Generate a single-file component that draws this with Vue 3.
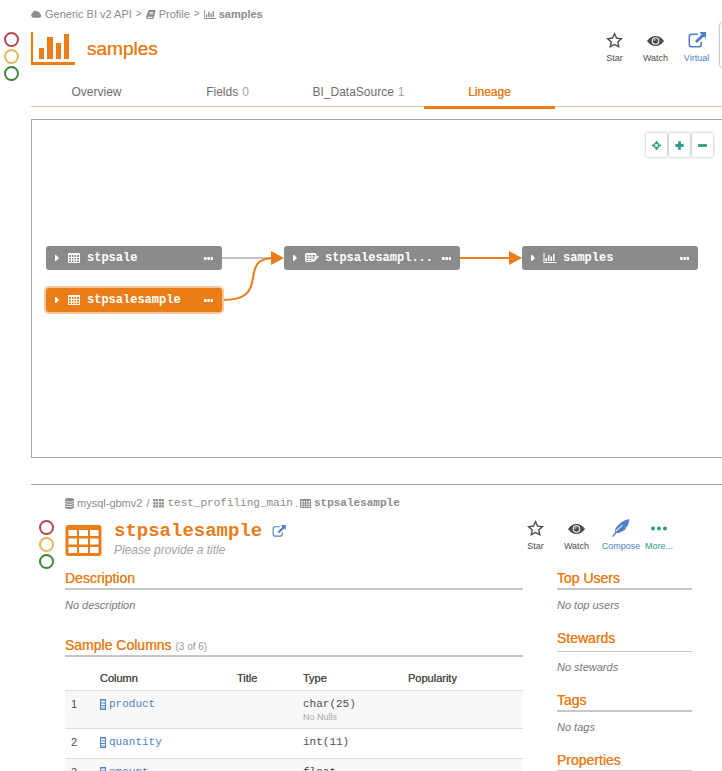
<script setup>
import { h } from 'vue'

const shapes = {
  chart: {
    box: '0 0 44 33',
    d: 'M0 0H2V30H44V33H0ZM8 16H13V27H8ZM16 5H22V27H16ZM25 11H30V27H25ZM33 2H38V27H33Z'
  },
  smallchart: {
    box: '0 0 26 20',
    d: 'M0 0H2V18H26V20H0ZM4 10H7V16H4ZM9 4H12V16H9ZM14 7H17V16H14ZM19 2H22V16H19Z'
  },
  table: {
    box: '0 0 36 31',
    d: 'M3 0H33Q36 0 36 3V28Q36 31 33 31H3Q0 31 0 28V3Q0 0 3 0ZM3 5V11H11.500V5ZM13.500 5V11H22.500V5ZM24.500 5V11H33V5ZM3 13.500V19.500H11.500V13.500ZM13.500 13.500V19.500H22.500V13.500ZM24.500 13.500V19.500H33V13.500ZM3 22V28H11.500V22ZM13.500 22V28H22.500V22ZM24.500 22V28H33V22Z'
  },
  grid: {
    box: '0 0 24 20',
    d: 'M2 0H22Q24 0 24 2V18Q24 20 22 20H2Q0 20 0 18V2Q0 0 2 0ZM2 4V8H6V4ZM8 4V8H11V4ZM13 4V8H16V4ZM18 4V8H22V4ZM2 10V13H6V10ZM8 10V13H11V10ZM13 10V13H16V10ZM18 10V13H22V10ZM2 15V18H6V15ZM8 15V18H11V15ZM13 15V18H16V15ZM18 15V18H22V15Z'
  },
  view: {
    box: '0 0 28 20',
    d: 'M4 0H20Q23 0 23 3V9L17 15L15 18H4Q0 18 0 14V4Q0 0 4 0ZM3 4V7H7V4ZM9 4V7H13V4ZM15 4V7H20V4ZM3 9V12H7V9ZM9 9V12H13V9ZM15 9V12H18L20 9ZM3 14V16H7V14ZM9 14V16H13V14ZM26 5L28 7L19 17L16 18L17 15Z'
  },
  cloud: {
    box: '0 0 30 20',
    d: 'M7 20A7 7 0 0 1 4 7A8 8 0 0 1 18 4A5 5 0 0 1 24 9A6 6 0 0 1 24 20Z'
  },
  book: {
    box: '0 0 26 24',
    d: 'M9 0H23Q26 1 25 4L20 21Q19 24 16 24H4Q0 23 0 19L5 3Q6 0 9 0ZM10 5L9 7H19L20 5ZM8 9L7 11H18L19 9ZM4 18Q3 21 5 21H16L18 18Z'
  },
  blocks: {
    box: '0 0 24 20',
    d: 'M0 0H5V5H0ZM6 0H11V5H6ZM13 0H18V5H13ZM19 0H24V5H19ZM0 7H5V12H0ZM6 7H11V12H6ZM13 7H18V12H13ZM19 7H24V12H19ZM0 14H5V19H0ZM6 14H11V19H6ZM13 14H18V19H13ZM19 14H24V19H19Z'
  },
  database: {
    box: '0 0 20 24',
    d: 'M0 3Q0 0 10 0T20 3V5Q20 8 10 8T0 5ZM0 7Q3 10 10 10T20 7V10Q20 13 10 13T0 10ZM0 12Q3 15 10 15T20 12V15Q20 18 10 18T0 15ZM0 17Q3 20 10 20T20 17V21Q20 24 10 24T0 21Z'
  },
  external: {
    box: '0 0 36 32',
    d: 'M7 3H20V6H8Q4 6 4 10V24Q4 28 8 28H21Q25 28 25 24V19H28V25Q28 31 22 31H7Q1 31 1 25V9Q1 3 7 3ZM23 0H36V13L32 9L18 22L14 18L27 5Z'
  },
  star: {
    box: '0 0 34 32',
    d: 'M17 0L22 11L34 12.500L25 20.500L27.500 32L17 26.500L6.500 32L9 20.500L0 12.500L12 11ZM17 6.500L13.800 13.500L6.500 14.500L12 19.500L10.500 27L17 23.500L23.500 27L22 19.500L27.500 14.500L20.200 13.500Z'
  },
  eye: {
    box: '0 0 34 20',
    d: 'M0 10Q7 0 17 0T34 10Q27 20 17 20T0 10ZM17 2.500A7.500 7.500 0 1 0 17 17.500A7.500 7.500 0 1 0 17 2.500ZM17 4.500A5.500 5.500 0 1 1 17 15.500A5.500 5.500 0 1 1 17 4.500ZM16 6.500A2.500 2.500 0 0 0 13.500 9.500H15A2 2 0 0 1 17 8V6.500Z'
  },
  feather: {
    box: '0 0 36 36',
    d: 'M0 35L6 27Q5 19 11 14Q14 11 18 7Q25 1 35 0Q34 8 31 14Q29 17 26 18L28 19Q25 23 20 25Q15 28 9 28L2 36ZM8 25L22 13L21 12L7 23Z'
  },
  dots: {
    box: '0 0 32 10',
    d: 'M4 1A4 4 0 1 1 4 9A4 4 0 1 1 4 1ZM16 1A4 4 0 1 1 16 9A4 4 0 1 1 16 1ZM28 1A4 4 0 1 1 28 9A4 4 0 1 1 28 1Z'
  },
  ellipsis: {
    box: '0 0 27 9',
    d: 'M1 0H6Q8 0 8 2V7Q8 9 6 9H2Q0 9 0 7V2ZM11 0H16Q18 0 18 2V7Q18 9 16 9H12Q10 9 10 7V2ZM21 0H25Q27 0 27 2V7Q27 9 25 9H22Q20 9 20 7V2Z'
  },
  caret: { box: '0 0 12 18', d: 'M0 0H3L12 9L3 18H0Z' },
  column: {
    box: '0 0 12 22',
    d: 'M0 0H12V22H0ZM2 3V7H10V3ZM2 9V12H10V9ZM2 14V17H10V14ZM2 19V20H10V19Z'
  },
  target: {
    box: '0 0 27 27',
    d: 'M11 0H16V4Q21 6 23 11H27V16H23Q21 21 16 23V27H11V23Q6 21 4 16H0V11H4Q6 6 11 4ZM11 8Q9 9 8 11H10V16H8Q9 18 11 19V17H16V19Q18 18 19 16H17V11H19Q18 9 16 8V10H11Z'
  },
  plus: { box: '0 0 26 26', d: 'M9 1H17V9H25V17H17V25H9V17H1V9H9Z' },
  minus: { box: '0 0 26 8', d: 'M0 0H26V8H0Z' }
}

const Icon = (props) =>
  h('svg', { viewBox: shapes[props.name].box, 'aria-hidden': 'true', fill: 'currentColor' }, [
    h('path', { d: shapes[props.name].d, 'fill-rule': 'evenodd' })
  ])
Icon.props = ['name']

const tabs = [
  { label: 'Overview' },
  { label: 'Fields', count: 0 },
  { label: 'BI_DataSource', count: 1 },
  { label: 'Lineage', active: true }
]

const nodes = [
  { id: 'sale', label: 'stpsale', icon: 'grid', x: 14, y: 126 },
  { id: 'sample', label: 'stpsalesample', icon: 'grid', x: 14, y: 168, selected: true },
  { id: 'source', label: 'stpsalesampl...', icon: 'view', x: 252, y: 126 },
  { id: 'report', label: 'samples', icon: 'smallchart', x: 490, y: 126 }
]

const columns = [
  { name: 'product', type: 'char(25)', note: 'No Nulls' },
  { name: 'quantity', type: 'int(11)' },
  { name: 'amount', type: 'float' }
]
</script>

<template>
  <main class="page">
    <section class="overview">
      <nav class="crumbs" aria-label="Breadcrumb">
        <a href="#"><Icon name="cloud" class="i-cloud" />Generic BI v2 API</a>
        <span class="sep">&gt;</span>
        <a href="#"><Icon name="book" class="i-book" />Profile</a>
        <span class="sep">&gt;</span>
        <a href="#" class="current"><Icon name="smallchart" class="i-chart" />samples</a>
      </nav>

      <div class="lights"><i class="red"></i><i class="amber"></i><i class="green"></i></div>
      <header class="head">
        <Icon name="chart" class="hero" />
        <h1>samples</h1>
        <div class="actions">
          <button type="button" class="action"><Icon name="star" class="i-star" />Star</button>
          <button type="button" class="action"><Icon name="eye" class="i-eye" />Watch</button>
          <button type="button" class="action blue"><Icon name="external" class="i-ext" />Virtual</button>
        </div>
        <button type="button" class="edge-button" aria-label="Menu"></button>
      </header>

      <ul class="tabs">
        <li v-for="t in tabs" :key="t.label" :class="{ active: t.active }">
          <a href="#">{{ t.label }}<span v-if="t.count !== undefined" class="count">{{ t.count }}</span></a>
        </li>
      </ul>

      <div class="canvas">
        <svg class="edges" aria-hidden="true">
          <path class="edge idle" d="M190 138H240" />
          <path class="edge" d="M190 180C214 180 219 172 221 158S226 139 241 138" />
          <path class="edge" d="M428 138H480" />
          <path class="tip" d="M239 131L252 138L239 145Z" />
          <path class="tip" d="M477 131L490 138L477 145Z" />
        </svg>
        <div
          v-for="n in nodes"
          :key="n.id"
          class="node"
          :class="{ selected: n.selected }"
          :style="{ left: n.x + 'px', top: n.y + 'px' }"
        >
          <Icon name="caret" class="i-caret" />
          <Icon :name="n.icon" class="i-node" />
          <span class="node-label">{{ n.label }}</span>
          <Icon name="ellipsis" class="i-more" />
        </div>
        <div class="zoom">
          <button type="button" aria-label="Center"><Icon name="target" class="i-zoom" /></button>
          <button type="button" aria-label="Zoom in"><Icon name="plus" class="i-zoom" /></button>
          <button type="button" aria-label="Zoom out"><Icon name="minus" class="i-zoom" /></button>
        </div>
      </div>
    </section>

    <section class="detail">
      <nav class="crumbs" aria-label="Table path">
        <a href="#"><Icon name="database" class="i-db" />mysql-gbmv2</a>
        <span class="sep">/</span>
        <a href="#" class="mono"><Icon name="blocks" class="i-blocks" />test_profiling_main</a>
        <span class="sep dot">.</span>
        <a href="#" class="current mono"><Icon name="grid" class="i-blocks" />stpsalesample</a>
      </nav>

      <div class="lights"><i class="red"></i><i class="amber"></i><i class="green"></i></div>
      <header class="head">
        <Icon name="table" class="hero" />
        <div class="titles">
          <h2>stpsalesample <a href="#" aria-label="Open"><Icon name="external" class="i-open" /></a></h2>
          <p>Please provide a title</p>
        </div>
        <div class="actions">
          <button type="button" class="action"><Icon name="star" class="i-star" />Star</button>
          <button type="button" class="action"><Icon name="eye" class="i-eye" />Watch</button>
          <button type="button" class="action blue wide"><Icon name="feather" class="i-feather" />Compose</button>
          <button type="button" class="action teal narrow"><Icon name="dots" class="i-dots" />More...</button>
        </div>
      </header>

      <div class="body">
        <div class="primary">
          <h3>Description</h3>
          <p class="empty">No description</p>
          <h3>Sample Columns <small>(3 of 6)</small></h3>
          <table>
            <colgroup>
              <col class="c-num" /><col class="c-name" /><col class="c-title" /><col class="c-type" /><col />
            </colgroup>
            <thead>
              <tr><th></th><th>Column</th><th>Title</th><th>Type</th><th>Popularity</th></tr>
            </thead>
            <tbody>
              <tr v-for="(c, i) in columns" :key="c.name">
                <td>{{ i + 1 }}</td>
                <td><a href="#" class="field"><Icon name="column" class="i-col" />{{ c.name }}</a></td>
                <td></td>
                <td><code>{{ c.type }}</code><span v-if="c.note" class="note">{{ c.note }}</span></td>
                <td></td>
              </tr>
            </tbody>
          </table>
        </div>
        <aside class="aside">
          <h3>Top Users</h3>
          <p class="empty">No top users</p>
          <h3 class="thin">Stewards</h3>
          <p class="empty">No stewards</p>
          <h3>Tags</h3>
          <p class="empty">No tags</p>
          <h3>Properties</h3>
        </aside>
      </div>
    </section>
  </main>
</template>

<style>
body {
  margin: 0;
  background: #fff;
}
</style>

<style scoped>
.page {
  height: 100vh;
  overflow: hidden;
  font: 11px/14px "Liberation Sans", Arial, sans-serif;
  color: #4d4d4d;
}
.page * {
  box-sizing: border-box;
}
h1, h2, h3, p, ul {
  margin: 0;
  padding: 0;
  font-weight: 400;
}
a {
  color: inherit;
  text-decoration: none;
}
svg {
  flex: none;
}
button {
  font: inherit;
  color: inherit;
  padding: 0;
  border: 0;
  background: none;
}
.mono, code, h2, .field, .node-label {
  font-family: "Courier New", "Liberation Mono", monospace;
}

.overview {
  display: grid;
  grid-template-columns: 27px minmax(0, 1fr);
  padding: 7px 0 0 4px;
}
.overview > :not(.lights),
.detail > :not(.lights) {
  grid-column: 2;
}
.lights {
  grid-column: 1;
  display: flex;
  flex-direction: column;
  gap: 2px;
  height: 46px;
  padding-top: 10px;
}
.lights i {
  flex: none;
  width: 15px;
  height: 15px;
  border: 2px solid;
  border-radius: 50%;
}
.lights .red { color: #b4454b; }
.lights .amber { color: #e9b45c; }
.lights .green { color: #3c873c; }

.crumbs {
  display: flex;
  align-items: center;
  color: #8b8b8b;
  white-space: nowrap;
}
.overview .crumbs {
  margin-bottom: 1px;
}
.crumbs a {
  display: flex;
  align-items: center;
  gap: 3px;
}
.crumbs .sep {
  padding: 0 4px;
}
.crumbs .dot {
  padding: 0 2px;
}
.overview .sep {
  font-size: 10px;
}
.current { font-weight: 700; }
.i-cloud { width: 11px; height: 8px; }
.i-book { width: 10px; height: 9px; }
.i-chart { width: 12px; height: 9px; }
.i-db { width: 9px; height: 11px; }
.i-blocks { width: 11px; height: 9px; }

.head {
  display: flex;
}
.overview .head {
  height: 46px;
}
.overview .hero {
  width: 44px;
  height: 33px;
  margin-top: 10px;
  color: #ea7d18;
}
h1 {
  margin: 15px 0 0 12px;
  font-size: 19px;
  line-height: 24px;
  color: #ea7d18;
  text-shadow: 0 0 0 currentColor;
}
.actions {
  display: flex;
  margin-left: auto;
}
.action {
  display: grid;
  grid-template-rows: 22px 12px;
  place-items: center;
  align-content: start;
  width: 41px;
  padding-top: 7px;
  font-size: 9px;
  line-height: 12px;
  row-gap: 1px;
}
.wide { width: 48px; }
.narrow { width: 28px; }
.blue { color: #4f80c8; }
.teal { color: #2a9d8b; }
.i-star { width: 17px; height: 16px; }
.i-eye { width: 17px; height: 10px; margin-top: 2px; }
.i-ext { width: 18px; height: 16px; }
.i-feather { width: 18px; height: 18px; }
.i-dots { width: 16px; height: 5px; }
.edge-button {
  width: 40px;
  height: 46px;
  margin: 0 -37px 0 2px;
  border: 1px solid #ccc;
  border-radius: 4px;
  box-shadow: 0 0 2px #ccc;
}

.tabs {
  display: flex;
  margin-top: 8px;
  list-style: none;
  font-size: 12px;
  text-align: center;
  color: #6e6e6e;
  border-bottom: 1px solid #f6c596;
}
.tabs li {
  width: 131px;
}
.tabs a {
  display: block;
  padding: 9px 0 7px;
}
.tabs .active {
  margin-bottom: -3px;
  color: #ea7d18;
  border-bottom: 3px solid #ea7d18;
  text-shadow: 0 0 0 currentColor;
}
.count {
  margin-left: 4px;
  color: #a3a3a3;
}

.canvas {
  position: relative;
  height: 339px;
  margin-top: 12px;
  border: 1px solid #a6a6a6;
  border-right: 0;
}
.edges {
  position: absolute;
  width: 100%;
  height: 100%;
}
.edge {
  fill: none;
  stroke: #ea7d18;
  stroke-width: 2;
}
.idle { stroke: #c4c4c4; }
.tip { fill: #ea7d18; }
.node {
  position: absolute;
  display: flex;
  align-items: center;
  width: 176px;
  height: 24px;
  padding: 0 9px;
  border-radius: 3px;
  background: #8b8b8b;
  color: #fff;
}
.node.selected {
  background: #ea7d18;
  box-shadow: 0 0 0 2px #f6c899;
}
.node-label {
  flex: 1;
  margin-left: 6px;
  font-size: 12px;
  font-weight: 700;
}
.i-caret { width: 4px; height: 6px; margin-right: 8px; }
.i-node { width: 14px; height: 10px; }
.i-more { width: 9px; height: 3px; }
.zoom {
  position: absolute;
  top: 13px;
  right: 9px;
  display: flex;
  gap: 2px;
}
.zoom button {
  display: grid;
  place-items: center;
  width: 21px;
  height: 24px;
  border-radius: 2px;
  background: #fff;
  box-shadow: 0 0 3px #aaa;
  color: #2a9d8b;
}
.i-zoom { width: 9px; height: 9px; }

.detail {
  display: grid;
  grid-template-columns: 26px minmax(0, 1fr);
  margin: 26px 0 0 31px;
  padding: 11px 30px 0 8px;
  border-top: 1px solid #a6a6a6;
}
.detail .head {
  height: 59px;
}
.detail .hero {
  width: 37px;
  height: 31px;
  margin-top: 15px;
  color: #ea7d18;
}
.titles {
  margin: 10px 0 0 12px;
}
h2 {
  display: flex;
  align-items: center;
  font-size: 19px;
  font-weight: 700;
  line-height: 22px;
  color: #ea7d18;
}
h2 a {
  display: flex;
  margin-left: 10px;
  color: #4f80c8;
}
.i-open { width: 14px; height: 12px; }
.titles p {
  font-size: 12px;
  line-height: 16px;
  font-style: italic;
  color: #a3a3a3;
}
.detail .actions { margin-right: 19px; }

.body {
  display: grid;
  grid-template-columns: minmax(0, 1fr) 135px;
  column-gap: 34px;
}
h3 {
  padding-bottom: 1px;
  border-bottom: 2px solid #c6c6c6;
  font-size: 14px;
  line-height: 18px;
  color: #ea7d18;
  text-shadow: 0 0 0 currentColor;
}
h3.thin {
  padding-bottom: 4px;
  border-bottom-width: 1px;
}
h3 small {
  font-size: 10px;
  line-height: 12px;
  color: #999;
  text-shadow: none;
}
.empty {
  margin: 8px 0 17px;
  font-style: italic;
  color: #777;
}
.primary .empty { margin-bottom: 24px; }

table {
  width: 100%;
  table-layout: fixed;
  border-collapse: separate;
  border-spacing: 0;
}
.c-num { width: 35px; }
.c-name { width: 137px; }
.c-title { width: 66px; }
.c-type { width: 105px; }
th {
  padding: 14px 0 5px;
  font-weight: 400;
  text-align: left;
  text-shadow: 0 0 0 currentColor;
  border-bottom: 1px solid #dcdcdc;
}
td {
  height: 30px;
  padding: 6px 0 5px;
  vertical-align: top;
  border-bottom: 1px solid #dcdcdc;
}
td:first-child { padding-left: 6px; }
tbody tr:nth-child(odd) { background: #f8f8f8; }
.field {
  display: flex;
  align-items: center;
  gap: 3px;
  color: #4f80c8;
}
.i-col { width: 6px; height: 11px; }
code {
  display: block;
  font-size: 11px;
}
.note {
  display: block;
  font-size: 9px;
  line-height: 12px;
  color: #aaa;
}
</style>
